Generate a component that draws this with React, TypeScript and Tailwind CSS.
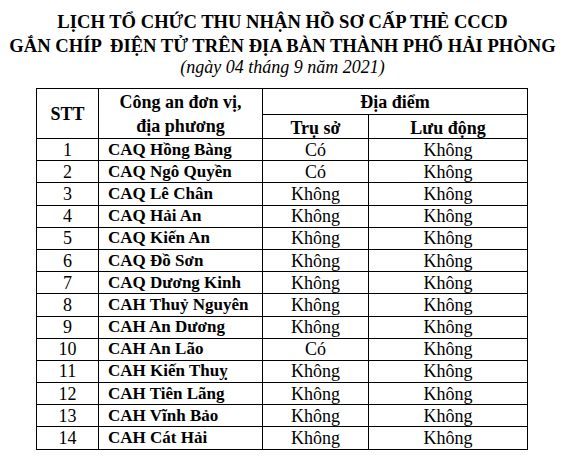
const rows: [string, string, string, string][] = [
  ["1", "CAQ Hồng Bàng", "Có", "Không"],
  ["2", "CAQ Ngô Quyền", "Có", "Không"],
  ["3", "CAQ Lê Chân", "Không", "Không"],
  ["4", "CAQ Hải An", "Không", "Không"],
  ["5", "CAQ Kiến An", "Không", "Không"],
  ["6", "CAQ Đồ Sơn", "Không", "Không"],
  ["7", "CAQ Dương Kinh", "Không", "Không"],
  ["8", "CAH Thuỷ Nguyên", "Không", "Không"],
  ["9", "CAH An Dương", "Không", "Không"],
  ["10", "CAH An Lão", "Có", "Không"],
  ["11", "CAH Kiến Thuỵ", "Không", "Không"],
  ["12", "CAH Tiên Lãng", "Không", "Không"],
  ["13", "CAH Vĩnh Bảo", "Không", "Không"],
  ["14", "CAH Cát Hải", "Không", "Không"],
];

export default function App() {
  return (
    <div className="w-[565px] h-[460px] bg-white text-black overflow-hidden font-['Liberation_Serif',serif]">
      <div className="pt-[10px] text-center font-bold text-[18.6px] leading-[24px]">
        <div>LỊCH TỔ CHỨC THU NHẬN HỒ SƠ CẤP THẺ CCCD</div>
        <div className="whitespace-pre">GẮN CHÍP  ĐIỆN TỬ TRÊN ĐỊA BÀN THÀNH PHỐ HẢI PHÒNG</div>
      </div>
      <div className="-mt-[1px] text-center italic text-[18px] leading-[20px]">(ngày 04 tháng 9 năm 2021)</div>
      <table className="ml-[36px] mt-[11px] w-[491px] border-collapse table-fixed">
        <colgroup>
          <col className="w-[62px]" />
          <col className="w-[164px]" />
          <col className="w-[106px]" />
          <col className="w-[159px]" />
        </colgroup>
        <thead className="font-bold text-[18px]">
          <tr className="h-[25px]">
            <th rowSpan={2} className="border border-black p-0 pt-[2px] align-middle">STT</th>
            <th rowSpan={2} className="border border-black p-0 pt-[1px] leading-[24px]">
              Công an đơn vị,
              <br />
              địa phương
            </th>
            <th colSpan={2} className="border border-black p-0 leading-[20px] pt-[1px]">Địa điểm</th>
          </tr>
          <tr className="h-[23px]">
            <th className="border border-black p-0 leading-[20px] pt-[2px]">Trụ sở</th>
            <th className="border border-black p-0 leading-[20px] pt-[2px]">Lưu động</th>
          </tr>
        </thead>
        <tbody className="text-[18px] leading-[20px]">
          {rows.map(([stt, name, a, b]) => (
            <tr key={stt} className="h-[22.2px]">
              <td className="border border-black text-center p-0">{stt}</td>
              <td className="border border-black font-bold text-[17px] p-0 pl-[9px]">{name}</td>
              <td className="border border-black text-center p-0">{a}</td>
              <td className="border border-black text-center p-0">{b}</td>
            </tr>
          ))}
        </tbody>
      </table>
    </div>
  );
}
